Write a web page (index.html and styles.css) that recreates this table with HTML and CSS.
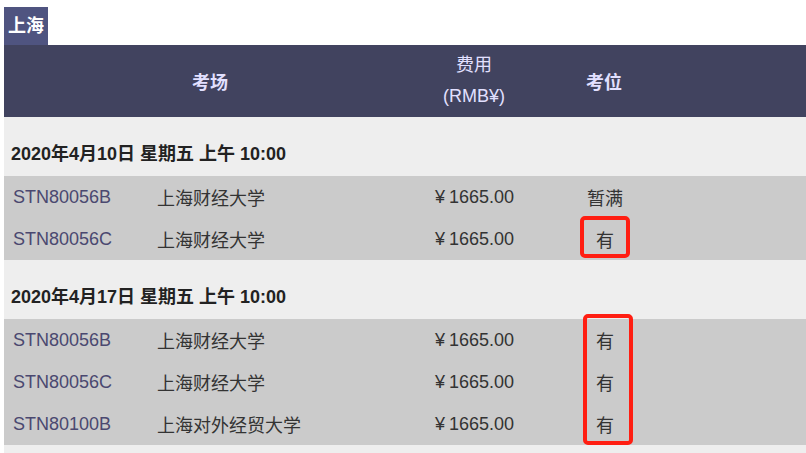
FILE: index.html
```html
<!DOCTYPE html>
<html lang="zh-CN">
<head>
<meta charset="utf-8">
<title>上海</title>
<link rel="stylesheet" href="styles.css">
</head>
<body>
<div class="page">
  <div class="tag-line"><span class="tag">上海</span></div>
  <div class="sheet">
    <div class="head">
      <div class="h-venue">考场</div>
      <div class="h-fee">费用<br>(RMB¥)</div>
      <div class="h-seat">考位</div>
    </div>

    <div class="date">2020年4月10日 星期五 上午 10:00</div>
    <div class="group">
      <div class="row">
        <div class="code">STN80056B</div><div class="name">上海财经大学</div><div class="price"><span class="yen">¥</span>1665.00</div><div class="seat">暂满</div>
      </div>
      <div class="row">
        <div class="code">STN80056C</div><div class="name">上海财经大学</div><div class="price"><span class="yen">¥</span>1665.00</div><div class="seat">有</div>
      </div>
    </div>

    <div class="date">2020年4月17日 星期五 上午 10:00</div>
    <div class="group">
      <div class="row">
        <div class="code">STN80056B</div><div class="name">上海财经大学</div><div class="price"><span class="yen">¥</span>1665.00</div><div class="seat">有</div>
      </div>
      <div class="row">
        <div class="code">STN80056C</div><div class="name">上海财经大学</div><div class="price"><span class="yen">¥</span>1665.00</div><div class="seat">有</div>
      </div>
      <div class="row">
        <div class="code">STN80100B</div><div class="name">上海对外经贸大学</div><div class="price"><span class="yen">¥</span>1665.00</div><div class="seat">有</div>
      </div>
    </div>
    <div class="tail"></div>

    <div class="mark mark-1"></div>
    <div class="mark mark-2"></div>
  </div>
</div>
</body>
</html>
```

FILE: styles.css
```css
html, body {
  margin: 0;
  padding: 0;
  background: #ffffff;
}
body {
  font-family: "Liberation Sans", "Noto Sans CJK SC", sans-serif;
  font-size: 18px;
  color: #333333;
}
.page {
  padding: 7px 0 0 4px;
}
.tag-line {
  display: flex;
}
.tag {
  display: block;
  background: #4f5480;
  color: #ffffff;
  font-weight: bold;
  height: 38px;
  line-height: 38px;
  padding: 0 4px;
}
.sheet {
  position: relative;
}
.head {
  display: grid;
  grid-template-columns: 412px 116px 144px 1fr;
  height: 72px;
  background: #41435f;
  color: #e2e0ff;
  align-items: center;
  text-align: center;
}
.h-venue, .h-seat {
  font-weight: bold;
}
.h-fee {
  line-height: 31px;
}
.date {
  background: #eeeeee;
  height: 59px;
  box-sizing: border-box;
  padding: 26px 0 0 7px;
  line-height: 22px;
  font-weight: bold;
  color: #222222;
}
.group {
  background: #cbcbcb;
}
.row {
  display: grid;
  grid-template-columns: 144px 272px 114px 142px 1fr;
  height: 42px;
  align-items: center;
}
.code {
  padding-left: 9px;
  color: #4a4870;
}
.name {
  padding-left: 9px;
}
.price {
  padding-left: 15px;
}
.yen {
  margin-right: 4px;
}
.seat {
  text-align: center;
}
.tail {
  background: #eeeeee;
  height: 10px;
}
.mark {
  position: absolute;
  border: 4px solid #ff1e12;
  border-radius: 5px;
  box-sizing: border-box;
}
.mark-1 {
  left: 576px;
  top: 171px;
  width: 50px;
  height: 42px;
}
.mark-2 {
  left: 579px;
  top: 269px;
  width: 50px;
  height: 131px;
}
```
